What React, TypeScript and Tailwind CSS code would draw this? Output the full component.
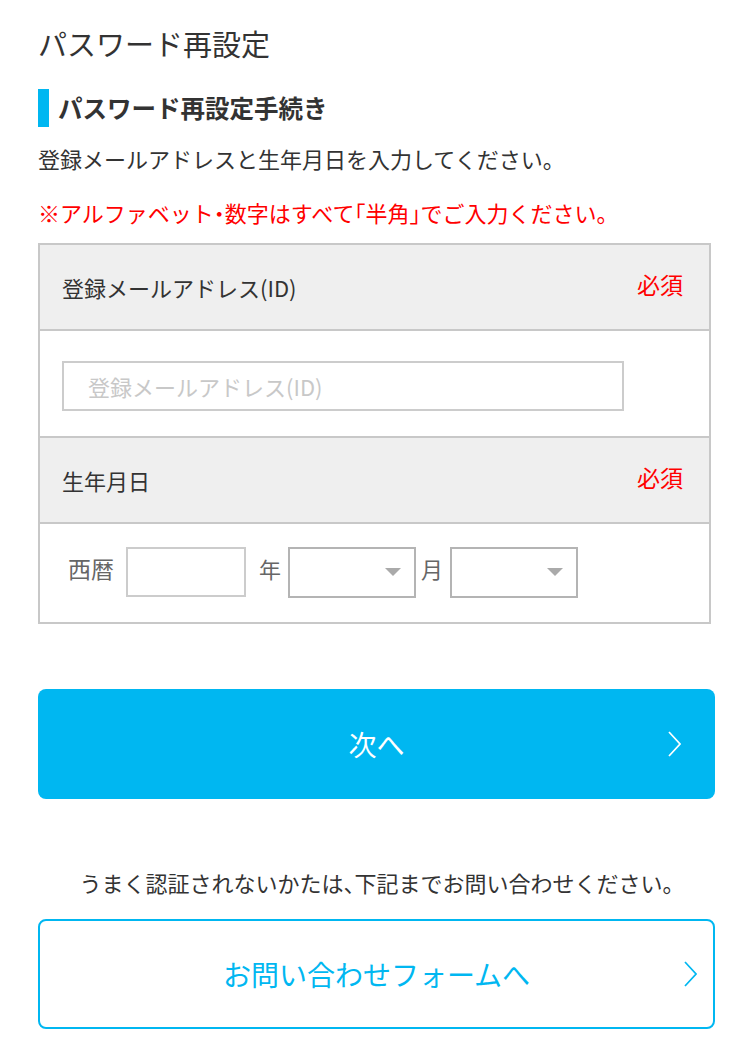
import React from "react";

const halt = "[font-feature-settings:'halt']";

function Chevron({ color }: { color: string }) {
  return (
    <svg width="13" height="26" viewBox="0 0 13 26" fill="none" className="shrink-0">
      <polyline points="1,1 12,13 1,25" stroke={color} strokeWidth="1.7" fill="none" />
    </svg>
  );
}

function SelectBox() {
  return (
    <div className="relative h-[51px] w-[128px] border-2 border-[#b4b4b4] bg-white">
      <svg width="16" height="9" viewBox="0 0 16 9" className="absolute left-[95px] top-[19px]">
        <polygon points="0,0 16,0 8,8" fill="#aaaaaa" />
      </svg>
    </div>
  );
}

export default function App() {
  return (
    <div
      className="min-h-[1059px] w-[750px] bg-white pl-[38px] pr-[35px] text-[#333333]"
      style={{ fontFamily: '"Noto Sans CJK JP", "Noto Sans", sans-serif' }}
    >
      <h1 className="pt-[21px] text-[29px] leading-[44px] font-normal">パスワード再設定</h1>

      <div className="mt-[24px] flex h-[38px] items-center">
        <div className="h-[38px] w-[11px] bg-[#00b7f1]" />
        <h2 className="ml-[9px] text-[24.5px] leading-[38px] font-bold text-[#333333]">パスワード再設定手続き</h2>
      </div>

      <p className="mt-[15px] text-[22px] leading-[32px]">
        登録メールアドレスと生年月日を入力してください<span className={halt}>。</span>
      </p>
      <p className="mt-[22px] text-[22px] leading-[32px] text-[#ff0000]">
        ※アルファベット<span className={halt}>・</span>数字はすべて<span className={halt}>「</span>半角<span className={halt}>」</span>でご入力ください<span className={halt}>。</span>
      </p>

      <div className="mt-[15px] w-[673px] border-2 border-[#c8c8c8]">
        <div className="flex h-[84px] items-center justify-between bg-[#efefef] pl-[22px] pr-[26px]">
          <span className="text-[22px] leading-[32px] text-[#333333]">登録メールアドレス(ID)</span>
          <span className="mb-[6px] text-[23px] leading-[32px] text-[#ff0000]">必須</span>
        </div>
        <div className="h-[107px] border-t-2 border-[#c8c8c8] pl-[22px] pt-[30px]">
          <div className="flex h-[50px] w-[562px] items-center border-2 border-[#cccccc] pl-[24px]">
            <span className="text-[22px] leading-[32px] text-[#c8c8c8]">登録メールアドレス(ID)</span>
          </div>
        </div>
        <div className="flex h-[86px] items-center justify-between border-t-2 border-[#c8c8c8] bg-[#efefef] pl-[22px] pr-[26px]">
          <span className="text-[22px] leading-[32px] text-[#333333]">生年月日</span>
          <span className="mb-[6px] text-[23px] leading-[32px] text-[#ff0000]">必須</span>
        </div>
        <div className="flex h-[100px] items-start border-t-2 border-[#c8c8c8] pl-[28px] pt-[23px]">
          <span className="mt-[5px] text-[23px] leading-[32px] text-[#666666]">西暦</span>
          <div className="ml-[12px] h-[50px] w-[120px] border-2 border-[#cccccc] bg-white" />
          <span className="ml-[13px] mt-[5px] text-[22px] leading-[32px] text-[#666666]">年</span>
          <div className="ml-[7px]">
            <SelectBox />
          </div>
          <span className="ml-[5px] mt-[5px] text-[22px] leading-[32px] text-[#666666]">月</span>
          <div className="ml-[7px]">
            <SelectBox />
          </div>
        </div>
      </div>

      <button className="mt-[65px] flex h-[110px] w-[677px] items-center rounded-[8px] bg-[#00b7f1] pr-[34px] relative">
        <span className="absolute inset-0 flex items-center justify-center text-[28px] leading-[40px] text-white">次へ</span>
        <span className="ml-auto"><Chevron color="#ffffff" /></span>
      </button>

      <p className="mt-[67px] w-[677px] text-center text-[22px] leading-[32px] text-[#333333]">
        うまく認証されないかたは<span className={halt}>、</span>下記までお問い合わせください<span className={halt}>。</span>
      </p>

      <button className="relative mt-[21px] flex h-[110px] w-[677px] items-center rounded-[8px] border-2 border-[#00b7f1] bg-white pr-[16px]">
        <span className="absolute inset-0 flex items-center justify-center text-[28px] leading-[40px] text-[#00b7f1]">お問い合わせフォームへ</span>
        <span className="ml-auto"><Chevron color="#00b7f1" /></span>
      </button>
    </div>
  );
}
